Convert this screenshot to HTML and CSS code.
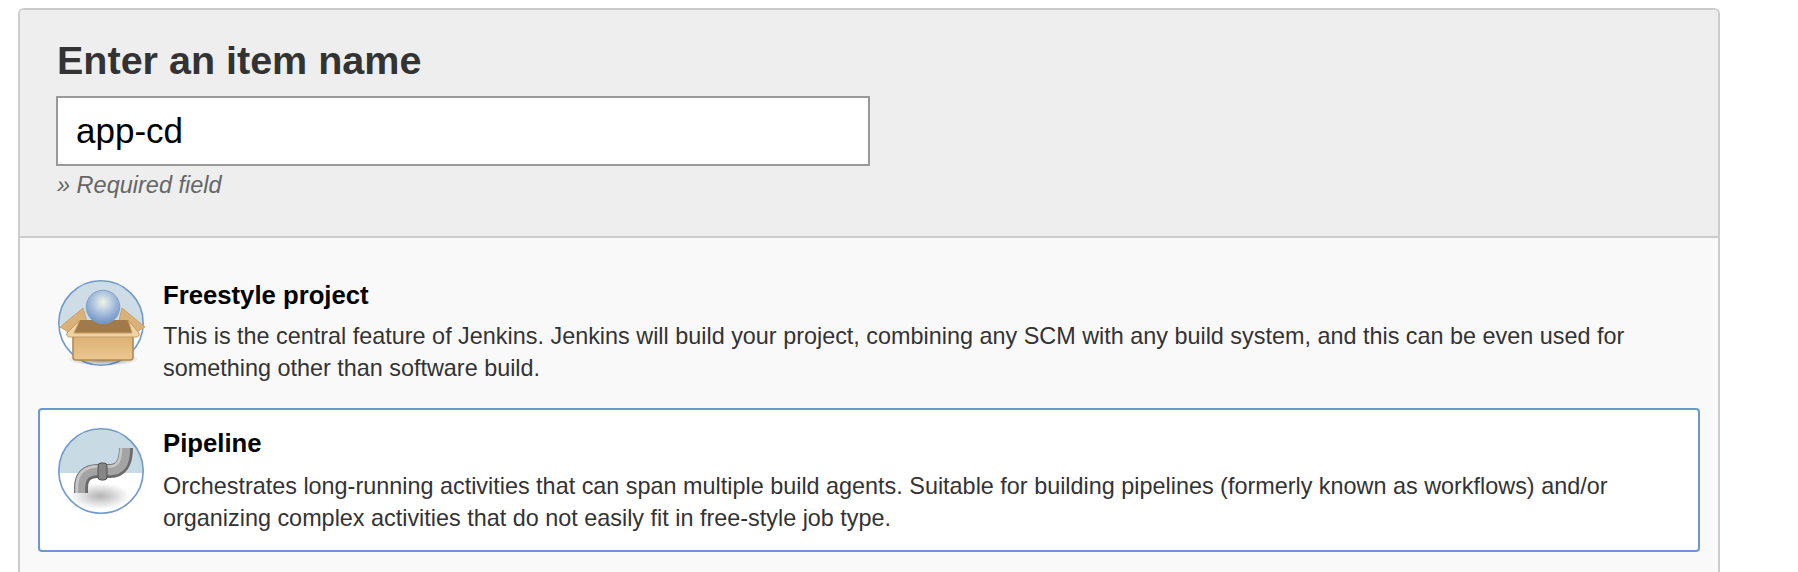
FILE: index.html
```html
<!DOCTYPE html>
<html lang="en">
<head>
<meta charset="utf-8">
<title>New Item</title>
<link rel="stylesheet" href="styles.css">
</head>
<body>
<main class="panel">
  <header class="head">
    <h1 class="head-title">Enter an item name</h1>
    <input class="name-input" type="text" value="app-cd">
    <div class="required">» Required field</div>
  </header>
  <section class="items">
    <div class="item">
      <svg class="item-icon" viewBox="-2 -2 90 90" aria-hidden="true">
        <defs>
          <radialGradient id="ball" cx="0.5" cy="0.36" r="0.66">
            <stop offset="0" stop-color="#f1f3ea"/><stop offset="0.5" stop-color="#a9c0dd"/><stop offset="1" stop-color="#6a90c4"/>
          </radialGradient>
          <linearGradient id="box" x1="0" y1="0" x2="0" y2="1">
            <stop offset="0" stop-color="#d9ae72"/><stop offset="1" stop-color="#ecc790"/>
          </linearGradient>
          <radialGradient id="shade1" cx="0.5" cy="0.5" r="0.5">
            <stop offset="0" stop-color="#555" stop-opacity="0.8"/><stop offset="1" stop-color="#555" stop-opacity="0"/>
          </radialGradient>
          <clipPath id="disc1"><circle cx="43" cy="43" r="42"/></clipPath>
        </defs>
        <g clip-path="url(#disc1)">
          <rect x="-2" y="-2" width="90" height="47" fill="#cddce5"/>
          <rect x="-2" y="45" width="90" height="45" fill="#fff"/>
        </g>
        <circle cx="43" cy="43" r="42.200" fill="none" stroke="#7099cf" stroke-width="1.600"/>
        <ellipse cx="45" cy="79" rx="36" ry="7" fill="url(#shade1)"/>
        <path d="M25 28 L2 47 L12 53 H32 Z M64 28 L87 47 L77 53 H58 Z" fill="#d9b27a" stroke="#c9a36a" stroke-width="1"/>
        <path d="M22 40 H70 L78 53 H14Z" fill="#a07a48"/>
        <circle cx="45" cy="27" r="16.800" fill="url(#ball)" stroke="#7b9ac6" stroke-width="0.800"/>
        <path d="M15 53 H75 V77 Q75 80 72 80 H18 Q15 80 15 77Z" fill="url(#box)" stroke="#b08a52" stroke-width="1.600"/>
        <path d="M22 40 L9 53 Q8 57 12 57 H78 Q82 57 81 53 L70 40 L74 53 H16Z" fill="#efd2a2" stroke="#c29a62" stroke-width="1"/>
      </svg>
      <div class="item-body">
        <div class="item-title">Freestyle project</div>
        <div class="item-desc">This is the central feature of Jenkins. Jenkins will build your project, combining any SCM with any build system, and this can be even used for something other than software build.</div>
      </div>
    </div>
    <div class="item item-active">
      <svg class="item-icon" viewBox="-2 -2 90 90" aria-hidden="true">
        <defs>
          <clipPath id="disc"><circle cx="43" cy="43" r="42"/></clipPath>
          <radialGradient id="shade2" cx="0.5" cy="0.5" r="0.5">
            <stop offset="0" stop-color="#777" stop-opacity="0.55"/><stop offset="1" stop-color="#777" stop-opacity="0"/>
          </radialGradient>
        </defs>
        <g clip-path="url(#disc)">
          <rect x="-2" y="-2" width="90" height="47" fill="#c8dae4"/>
          <rect x="-2" y="45" width="90" height="45" fill="#fff"/>
          <ellipse cx="42" cy="68" rx="30" ry="13" fill="url(#shade2)"/>
        </g>
        <circle cx="43" cy="43" r="42.200" fill="none" stroke="#7099cf" stroke-width="1.600"/>
        <path d="M23 65 V60 Q23 43 40 43 H52 Q68 43 68 20" fill="none" stroke="#6a6a6a" stroke-width="14"/>
        <path d="M22 65 V60 Q22 42 40 42 H52 Q67 42 67 20" fill="none" stroke="#a4a4a4" stroke-width="10.500"/>
        <path d="M18.800 65 V60 Q18.800 38.500 40 38.500 H52 Q63 38.500 63 20" fill="none" stroke="#c8c8c8" stroke-width="2.500"/>
        <rect x="40" y="35" width="9" height="17" rx="3" fill="#858585" stroke="#505050" stroke-width="1"/>
      </svg>
      <div class="item-body">
        <div class="item-title">Pipeline</div>
        <div class="item-desc">Orchestrates long-running activities that can span multiple build agents. Suitable for building pipelines (formerly known as workflows) and/or organizing complex activities that do not easily fit in free-style job type.</div>
      </div>
    </div>
  </section>
</main>
</body>
</html>
```
FILE: styles.css
```css
html, body {
  height: 100%;
  overflow: hidden;
}
body {
  margin: 0;
  padding: 8px 78px 0 18px;
  box-sizing: border-box;
  background: #fff;
  font-family: "Liberation Sans", Arial, sans-serif;
}
.panel {
  border: 2px solid #ccc;
  border-bottom: 0;
  border-radius: 6px 6px 0 0;
  background: #f9f9f9;
  min-height: 620px;
}
.head {
  background: #eee;
  border-bottom: 2px solid #ccc;
  border-radius: 4px 4px 0 0;
  padding: 28px 36px 0;
  height: 228px;
  box-sizing: border-box;
}
.head-title {
  margin: 0 0 14px 1px;
  font-size: 39.500px;
  line-height: 44px;
  font-weight: 700;
  color: #333;
}
.name-input {
  display: block;
  box-sizing: border-box;
  width: 814px;
  height: 70px;
  border: 2px solid #999;
  background: #fff;
  padding: 0 18px;
  font-family: inherit;
  font-size: 35px;
  color: #000;
  outline: none;
}
.required {
  margin: 6px 0 0 1px;
  font-size: 23.500px;
  line-height: 26px;
  font-style: italic;
  color: #666;
}
.items {
  padding: 22px 18px 0 18px;
}
.item {
  display: flex;
  gap: 17px;
  box-sizing: border-box;
  height: 144px;
  padding: 16px 16px 0;
  border: 2px solid transparent;
  border-radius: 4px;
}
.item + .item {
  margin-top: 4px;
}
.item-active {
  background: #fff;
  border-color: #6d98cf;
}
.item-icon {
  flex: none;
  width: 90px;
  height: 90px;
}
.item-body {
  flex: 1;
  min-width: 0;
  padding-top: 2px;
}
.item-title {
  font-size: 25.700px;
  line-height: 30px;
  font-weight: 700;
  color: #000;
  margin-bottom: 10px;
}
.item-active .item-title {
  margin-bottom: 12px;
}
.item-desc {
  font-size: 23.400px;
  line-height: 32px;
  color: #333;
}
```
